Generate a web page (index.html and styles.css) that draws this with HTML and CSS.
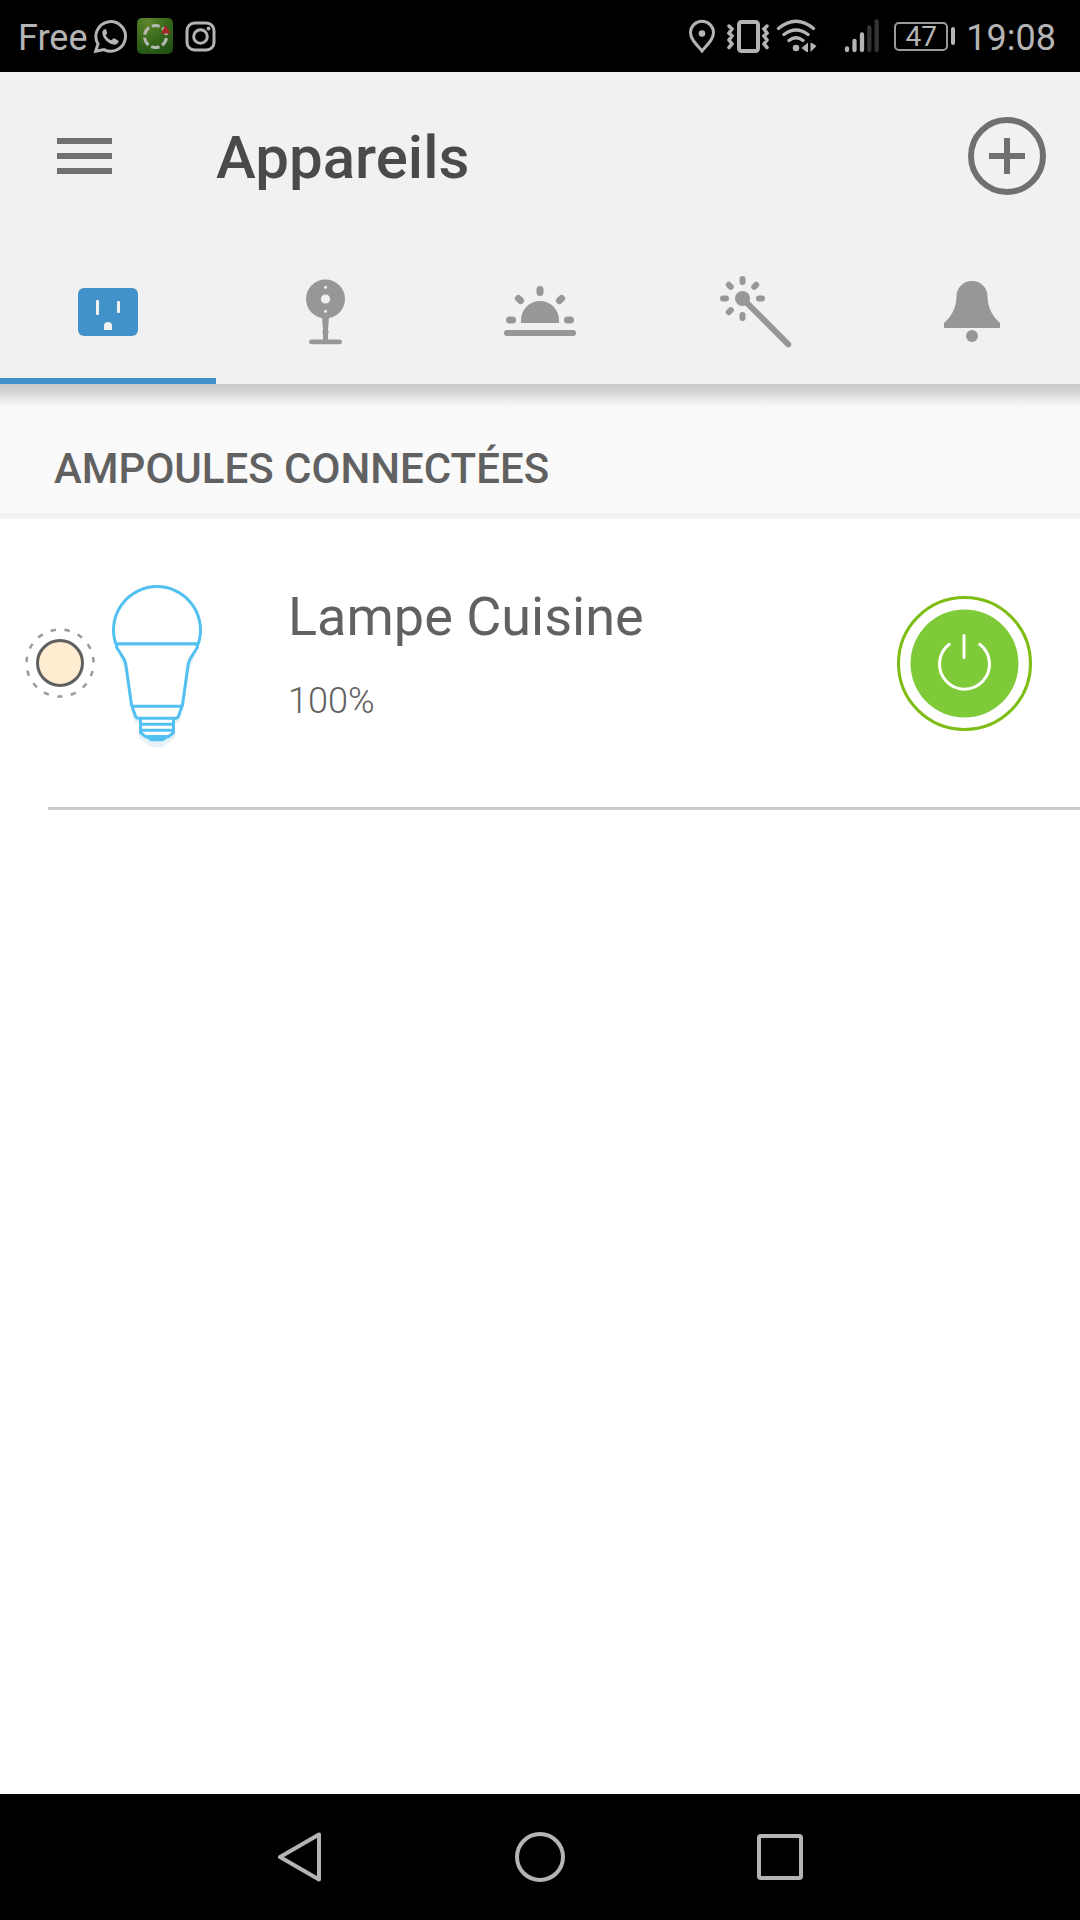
FILE: index.html
```html
<!DOCTYPE html>
<html lang="fr">
<head>
<meta charset="utf-8">
<meta name="viewport" content="width=device-width, initial-scale=1">
<title>Appareils</title>
<link rel="stylesheet" href="styles.css">
</head>
<body>
<div class="status-bar">
  <div class="status-left">
    <span class="carrier">Free</span>
    <svg width="36" height="36" viewBox="0 0 36 36" fill="none" stroke="#b4b4b4" stroke-width="3" aria-hidden="true">
      <path d="M3.7 33.2 6 26a14.8 14.8 0 1 1 6 5.600z" stroke-linejoin="miter"/>
      <path d="M13.200 11c-1.400.3-3 2-2.900 4 .3 5.600 6.500 11.300 12 11.700 2 .1 4-1.400 4.300-3.200.1-.9-.2-1.100-4.800-3.300-.8-.2-1.500 1.700-2.400 2.100-2.300-.7-4.700-2.900-5.600-4.900.4-.9 1.600-1.500 1.400-2.300-.8-3.200-1.100-4.100-2-4.100z" fill="#b4b4b4" stroke="none"/>
    </svg>
    <svg width="36" height="36" viewBox="0 0 36 36" aria-hidden="true">
      <defs><radialGradient id="leaf" cx="0.3" cy="0.1" r="1.100"><stop offset="0" stop-color="#5f852b"/><stop offset=".5" stop-color="#37681b"/><stop offset="1" stop-color="#1a4b13"/></radialGradient></defs>
      <rect width="36" height="36" rx="5" fill="url(#leaf)"/>
      <circle cx="18.500" cy="18.500" r="11" fill="none" stroke="#b4b8b0" stroke-width="3" stroke-dasharray="8.500 3.020" stroke-dashoffset="4.250" transform="rotate(-90 18.500 18.500)"/>
      <path d="M24 15.500 28.500 7l5.300 8.500z" fill="#a32728"/>
    </svg>
    <svg width="36" height="36" viewBox="0 0 36 36" fill="none" stroke="#b4b4b4" stroke-width="3" aria-hidden="true">
      <rect x="5" y="5" width="27" height="27" rx="7.500"/><circle cx="18.500" cy="18.500" r="6.800"/><circle cx="26.500" cy="10.500" r="1.900" fill="#b4b4b4" stroke="none"/>
    </svg>
  </div>
  <div class="status-right">
    <svg width="36" height="36" viewBox="0 0 36 36" aria-hidden="true">
      <path d="M18 33C12 26 6.500 21 6.500 14.500a11.500 11.200 0 0 1 23 0C29.500 21 24 26 18 33z" fill="none" stroke="#b4b4b4" stroke-width="3"/><circle cx="18" cy="15.500" r="3.300" fill="#b4b4b4"/>
    </svg>
    <svg width="44" height="36" viewBox="0 0 44 36" fill="none" stroke="#b4b4b4" aria-hidden="true">
      <rect x="13" y="4" width="19" height="29" rx="2.500" stroke-width="4"/>
      <path d="m3 8 3 3-3 4 3 3-3 4 3 4-3 3.500M41 8l-3 3 3 4-3 3 3 4-3 4 3 3.500" stroke-width="3.500" stroke-linecap="round"/>
    </svg>
    <svg width="42" height="36" viewBox="0 0 42 36" aria-hidden="true">
      <path d="M2.500 10.500q17.500-14.500 35 0M8 16.500q12-9 24 0M13 22.500q7-5.500 14 0" fill="none" stroke="#b4b4b4" stroke-width="3.300" stroke-linecap="round"/>
      <circle cx="20" cy="30" r="3.300" fill="#b4b4b4"/><path d="m25.500 30 6.500-5.500v9.500h-1.500zM40.500 28 34.500 34v-9h1.500z" fill="#b4b4b4"/>
    </svg>
    <svg class="signal" width="36" height="36" viewBox="0 0 36 36" fill="none" stroke-width="4.300" stroke-linecap="round" aria-hidden="true">
      <path d="M3 30.500v1.500M10.500 23v9M18 16.500V32" stroke="#b4b4b4"/><path d="M25.300 9.500V32M32.700 3.500V32" stroke="#333"/>
    </svg>
    <span class="battery"><span class="battery-level">47</span></span>
    <time class="clock">19:08</time>
  </div>
</div>

<header class="app-header">
  <div class="title-bar">
    <button class="icon-button" type="button" aria-label="Menu">
      <svg width="56" height="36" viewBox="0 0 56 36" fill="#707070"><path d="M0 0h55v6H0zM0 15h55v6H0zM0 30h55v6H0z"/></svg>
    </button>
    <h1>Appareils</h1>
    <button class="icon-button" type="button" aria-label="Ajouter">
      <svg width="78" height="78" viewBox="0 0 78 78" fill="none" stroke="#707070" stroke-width="6"><circle cx="39" cy="39" r="36"/><path d="M21 39h36M39 21v36"/></svg>
    </button>
  </div>
  <nav class="tabs" aria-label="Catégories">
    <button class="tab active" type="button" aria-label="Prises et ampoules" aria-current="page">
      <svg width="72" height="72" viewBox="0 0 72 72"><rect x="6" y="12" width="60" height="48" rx="6" fill="currentColor"/><path d="M32 54v-4a4 4 0 0 1 8 0v4z" fill="#f1f1f1"/><rect x="24" y="24" width="3" height="15" rx="1" fill="#f1f1f1"/><rect x="45" y="25" width="3" height="12" rx="1" fill="#f1f1f1"/></svg>
    </button>
    <button class="tab" type="button" aria-label="Caméras">
      <svg width="72" height="72" viewBox="0 0 72 72" fill="currentColor"><circle cx="37.500" cy="23" r="19.500"/><path d="M34 41h7l-1 13q1.500 2 0 4v6h-5v-6q-1.500-2 0-4z"/><rect x="21" y="63.500" width="33" height="4.800" rx="2.400"/><g fill="#f1f1f1"><circle cx="37.500" cy="23" r="4.600"/><circle cx="37.500" cy="11.300" r="1.500"/><circle cx="37.500" cy="35.300" r="1.500"/></g></svg>
    </button>
    <button class="tab" type="button" aria-label="Scènes">
      <svg width="72" height="72" viewBox="0 0 72 72" fill="currentColor"><path d="M17 47v-3a19 19 0 0 1 38 0v3z"/><rect y="54" width="72" height="6" rx="3"/><path d="M36 13.500v3M5.500 44h3M63.500 44h3M14.400 22.400l2.200 2.200M57.600 22.400l-2.200 2.200" fill="none" stroke="currentColor" stroke-width="7" stroke-linecap="round"/></svg>
    </button>
    <button class="tab" type="button" aria-label="Actions intelligentes">
      <svg width="72" height="72" viewBox="0 0 72 72" fill="none" stroke="currentColor" stroke-width="6" stroke-linecap="round"><circle cx="22.500" cy="22.500" r="7.500" fill="currentColor" stroke="none"/><path d="M22.500 22.500 68.300 68.300M22.500 3v3M22.500 39v3M3 22.500h3M39 22.500h3M8.800 8.800l2 2M36.200 8.800l-2 2M8.800 36.200l2-2"/></svg>
    </button>
    <button class="tab" type="button" aria-label="Notifications">
      <svg width="72" height="72" viewBox="0 0 72 72" fill="currentColor"><path d="M8 52v-5C15 41 20.500 32 20.500 20a15.500 15 0 0 1 31 0C51.500 32 57 41 64 47v5z"/><circle cx="36" cy="60" r="6"/></svg>
    </button>
  </nav>
</header>

<main class="devices">
  <h2>AMPOULES CONNECTÉES</h2>
  <ul class="device-list">
    <li class="device">
      <button class="icon-button" type="button" aria-label="Couleur">
        <svg width="72" height="72" viewBox="0 0 72 72"><circle cx="36" cy="36" r="22.500" fill="#ffecd1" stroke="#5f5f5f" stroke-width="3"/><circle cx="36" cy="36" r="33.500" fill="none" stroke="#9a9a9a" stroke-width="2.500" stroke-dasharray="5.400 8.633" stroke-dashoffset="2.700" transform="rotate(90 36 36)"/></svg>
      </button>
      <svg class="bulb" width="96" height="168" viewBox="0 0 96 168" aria-hidden="true">
        <path d="M5.500 57Q8 71 16 89L24 134q2 11 7 11v14l7 5 5 4h12l5-4 7-5v-14q5 0 7-11l8-45q8-18 10.500-32z" fill="#e6f2f8"/>
        <g fill="#fff" stroke="#52c0f0" stroke-width="3" stroke-linejoin="round">
          <path d="M32.500 139v14.500l5 4.200h23l5-4.200V139M32.500 145.300h33M32.500 151.300h33"/>
          <path d="M39 157.500h20l-4 3.200H43z" fill="#52c0f0"/>
          <path d="M10.500 64.700q-3.500 2-1 5L16 80q2 4 2.500 10l5 36 4 11q.8 2.300 3 2.300h37q2.200 0 3-2.300l4-11 5-36q.5-6 2.500-10l6.500-10.300q2.500-3-1-5zM23.700 127.300h50.600"/>
          <path d="M7.700 64.700a43.500 43.500 0 1 1 82.600 0z"/>
        </g>
      </svg>
      <div class="device-text">
        <h3>Lampe Cuisine</h3>
        <p>100%</p>
      </div>
      <button class="icon-button" type="button" aria-label="Allumer ou éteindre" aria-pressed="true">
        <svg width="135" height="135" viewBox="0 0 135 135" fill="none"><circle cx="67.500" cy="67.500" r="66" stroke="#7dbd14" stroke-width="3"/><circle cx="67.500" cy="67.500" r="54" fill="#7fca38"/><path d="M67 39.500v22M52.300 48.300a25 25 0 1 0 30.400 0" stroke="#fff" stroke-width="3" stroke-linecap="round"/></svg>
      </button>
    </li>
  </ul>
</main>

<nav class="system-nav" aria-label="Système">
  <button type="button" aria-label="Retour"><svg width="50" height="50" viewBox="0 0 50 50"><path d="M44 2.500v45L5 25z"/></svg></button>
  <button type="button" aria-label="Accueil"><svg width="50" height="50" viewBox="0 0 50 50"><circle cx="25" cy="25" r="23"/></svg></button>
  <button type="button" aria-label="Applications récentes"><svg width="50" height="50" viewBox="0 0 50 50"><rect x="4" y="4" width="42" height="42" rx="2"/></svg></button>
</nav>
</body>
</html>
```
FILE: styles.css
```css
* {
  box-sizing: border-box;
  margin: 0;
  padding: 0;
}

body {
  display: flex;
  flex-direction: column;
  min-height: 100vh;
  background: #fff;
  color: #616161;
  font-family: Roboto, "Liberation Sans", sans-serif;
}

button {
  border: 0;
  background: none;
  color: inherit;
  font: inherit;
}

svg {
  display: block;
  flex: none;
}

/* Status bar */
.status-bar {
  display: flex;
  justify-content: space-between;
  align-items: center;
  height: 72px;
  padding: 0 24px 0 18px;
  background: #000;
  color: #b4b4b4;
  font-size: 36px;
  line-height: 48px;
}

.status-left,
.status-right {
  display: flex;
  align-items: center;
}

.status-left {
  gap: 9px;
}

.carrier,
.clock {
  padding-top: 3px;
}

.carrier {
  margin-right: -5px;
}

.status-right {
  gap: 6px;
}

.signal {
  margin: 0 8px 0 20px;
}

.battery {
  display: flex;
  align-items: center;
  gap: 3px;
  margin-right: 5px;
}

.battery-level {
  width: 54px;
  border: 2px solid #9a9a9a;
  border-radius: 5px;
  font-size: 28px;
  line-height: 25px;
  text-align: center;
}

.battery::after {
  content: "";
  width: 4px;
  height: 18px;
  border-radius: 2px;
  background: #b4b4b4;
}

/* Header and tabs */
.app-header {
  background: #f1f1f1;
}

.title-bar {
  display: flex;
  align-items: center;
  height: 168px;
  padding: 0 34px 0 57px;
}

.icon-button {
  flex: none;
}

h1 {
  flex: 1;
  margin-left: 103px;
  padding-top: 4px;
  color: #4a4a4a;
  font-size: 60px;
  font-weight: 500;
  line-height: 72px;
}

.tabs {
  display: grid;
  grid-template-columns: repeat(5, 1fr);
}

.tab {
  display: flex;
  justify-content: center;
  height: 144px;
  padding-top: 36px;
  border-bottom: 6px solid transparent;
  color: #979797;
}

.tab.active {
  border-color: #4192c8;
  color: #4192c8;
}

/* Device list */
.devices {
  flex: 1;
}

h2 {
  padding: 61px 54px 20px;
  border-bottom: 6px solid #f1f1f1;
  background: linear-gradient(#c8c8c8, #d6d6d6 8px, #f0f0f0 18px, #fafafa 24px);
  font-size: 42px;
  font-weight: 500;
  line-height: 48px;
}

.device-list {
  list-style: none;
}

.device {
  display: flex;
  align-items: center;
  height: 291px;
  margin-left: 48px;
  padding-right: 48px;
  border-bottom: 3px solid #cacaca;
}

.device > :first-child {
  margin-left: -24px;
}

.bulb {
  margin-left: 12px;
}

.device-text {
  flex: 1;
  margin-left: 84px;
  padding-bottom: 20px;
}

h3 {
  font-size: 54px;
  font-weight: 400;
  line-height: 72px;
}

.device-text p {
  margin-top: 24px;
  font-size: 36px;
  font-weight: 300;
  line-height: 48px;
}

/* System navigation */
.system-nav {
  display: flex;
  justify-content: center;
  height: 126px;
  background: #000;
}

.system-nav button {
  display: flex;
  justify-content: center;
  align-items: center;
  width: 240px;
}

.system-nav svg {
  fill: none;
  stroke: #b4b4b4;
  stroke-width: 4px;
  stroke-linejoin: round;
}
```
